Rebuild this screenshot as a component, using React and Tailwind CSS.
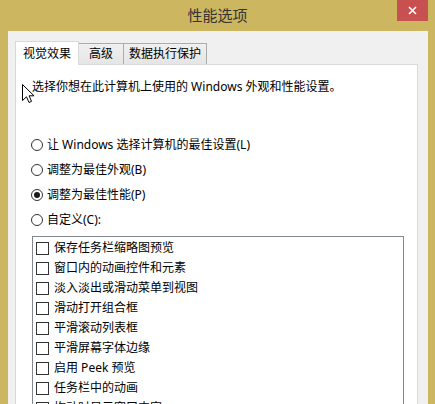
import React from 'react';

const font = { fontFamily: '"Noto Sans", "Noto Sans CJK SC", sans-serif' };

const options = [
  { label: '让 Windows 选择计算机的最佳设置(L)', checked: false },
  { label: '调整为最佳外观(B)', checked: false },
  { label: '调整为最佳性能(P)', checked: true },
  { label: '自定义(C):', checked: false },
];

const effects = [
  '保存任务栏缩略图预览',
  '窗口内的动画控件和元素',
  '淡入淡出或滑动菜单到视图',
  '滑动打开组合框',
  '平滑滚动列表框',
  '平滑屏幕字体边缘',
  '启用 Peek 预览',
  '任务栏中的动画',
  '拖动时显示窗口内容',
  '显示亮度半透明的选择长方形',
];

function Radio({ checked }) {
  return (
    <span className="w-[12px] h-[12px] rounded-full border border-[#333] bg-white flex items-center justify-center -ml-[1px]">
      {checked && <span className="w-[6px] h-[6px] rounded-full bg-[#1a1a1a]" />}
    </span>
  );
}

function Cursor() {
  return (
    <svg className="absolute left-[22px] top-[84px]" width="13" height="20" viewBox="0 0 13 20">
      <path
        d="M0.5 0.5 L0.5 16.5 L4.5 12.8 L7 18.5 L9.5 17.4 L7.1 11.8 L12 11.8 Z"
        fill="#fff"
        stroke="#000"
        strokeWidth="1"
        strokeLinejoin="miter"
      />
    </svg>
  );
}

export default function App() {
  return (
    <div className="w-[435px] h-[404px] bg-[#cdb660] overflow-hidden flex flex-col relative" style={font}>
      {/* title bar */}
      <div className="h-[31px] grid grid-cols-[1fr_auto_1fr] items-start shrink-0">
        <div />
        <div className="mt-[5px] text-[15px] leading-[20px] text-[#333]">性能选项</div>
        <div className="flex justify-end">
          <button className="mr-[7px] w-[31px] h-[21px] bg-[#c75050] text-white flex items-center justify-center">
            <svg width="9" height="9" viewBox="0 0 9 9">
              <path d="M1 1 L8 8 M8 1 L1 8" stroke="#fff" strokeWidth="1.6" />
            </svg>
          </button>
        </div>
      </div>

      {/* client area */}
      <div className="flex-1 ml-[8px] mr-[7px] bg-[#f0f0f0] pl-[7px] pr-[10px] pt-[10px] flex flex-col text-[12px] text-black">
        <div className="flex items-end h-[23px] relative z-10">
          <div className="w-[64px] h-[24px] -mb-px bg-white border border-b-0 border-[#d9d9d9] flex items-center justify-center leading-[16px]">
            视觉效果
          </div>
          <div className="w-[45px] h-[21px] bg-gradient-to-b from-[#f0f0f0] to-[#e5e5e5] border border-b-0 border-l-0 border-[#acacac] flex items-center justify-center leading-[16px]">
            高级
          </div>
          <div className="w-[83px] h-[21px] bg-gradient-to-b from-[#f0f0f0] to-[#e5e5e5] border border-b-0 border-l-0 border-[#acacac] flex items-center justify-center leading-[16px]">
            数据执行保护
          </div>
        </div>

        <div className="flex-1 bg-white border border-[#d9d9d9] pl-[16px]">
          <p className="mt-[14px] leading-[16px]">选择你想在此计算机上使用的 Windows 外观和性能设置。</p>

          <div className="mt-[37px] flex flex-col">
            {options.map((o) => (
              <label key={o.label} className="h-[25px] flex items-center gap-[4px]">
                <Radio checked={o.checked} />
                <span className="leading-[16px]">{o.label}</span>
              </label>
            ))}
          </div>

          <div className="mt-[4px] w-[372px] border border-[#828790] pl-[3px] pt-px flex flex-col">
            {effects.map((e) => (
              <div key={e} className="h-[20px] flex items-center">
                <span className="w-[13px] h-[13px] border border-[#333] bg-white" />
                <span className="ml-[5px] leading-[16px]">{e}</span>
              </div>
            ))}
          </div>
        </div>
      </div>

      <Cursor />
    </div>
  );
}
